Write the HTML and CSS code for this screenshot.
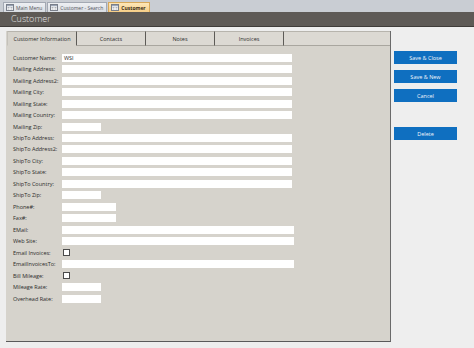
FILE: index.html
```html
<!DOCTYPE html>
<html lang="en">
<head>
    <meta charset="UTF-8">
    <title>Customer</title>
    <link rel="stylesheet" href="styles.css">
</head>
<body>
    <!-- Document tabs -->
    <div class="doc-tabs">
        <div class="doc-tab">
            <svg class="form-icon" viewBox="0 0 8 7"><rect x="0.5" y="0.5" width="7" height="6" fill="#fff" stroke="#7a7f8a"/><rect x="1" y="1" width="6" height="1.3" fill="#9aa4b4"/><path d="M1.5 3.5h2M1.5 5h2M4.5 3.5h2M4.5 5h2" stroke="#8a8f99" stroke-width="0.7"/></svg>
            Main Menu
        </div>
        <div class="doc-tab">
            <svg class="form-icon" viewBox="0 0 8 7"><rect x="0.5" y="0.5" width="7" height="6" fill="#fff" stroke="#7a7f8a"/><rect x="1" y="1" width="6" height="1.3" fill="#9aa4b4"/><path d="M1.5 3.5h2M1.5 5h2M4.5 3.5h2M4.5 5h2" stroke="#8a8f99" stroke-width="0.7"/></svg>
            Customer - Search
        </div>
        <div class="doc-tab active">
            <svg class="form-icon" viewBox="0 0 8 7"><rect x="0.5" y="0.5" width="7" height="6" fill="#fff" stroke="#7a7f8a"/><rect x="1" y="1" width="6" height="1.3" fill="#9aa4b4"/><path d="M1.5 3.5h2M1.5 5h2M4.5 3.5h2M4.5 5h2" stroke="#8a8f99" stroke-width="0.7"/></svg>
            Customer
        </div>
    </div>

    <div class="title-bar">Customer</div>

    <div class="main">
        <div class="form-panel">
            <div class="tab-strip">
                <div class="tab active">Customer Information</div>
                <div class="tab">Contacts</div>
                <div class="tab">Notes</div>
                <div class="tab">Invoices</div>
                <div class="tab-fill"></div>
            </div>

            <div class="fields">
                <label>Customer Name:</label><div class="field long">WSI</div>
                <label>Mailing Address:</label><div class="field long"></div>
                <label>Mailing Address2:</label><div class="field long"></div>
                <label>Mailing City:</label><div class="field long"></div>
                <label>Mailing State:</label><div class="field long"></div>
                <label>Mailing Country:</label><div class="field long"></div>
                <label>Mailing Zip:</label><div class="field short"></div>
                <label>ShipTo Address:</label><div class="field long"></div>
                <label>ShipTo Address2:</label><div class="field long"></div>
                <label>ShipTo City:</label><div class="field long"></div>
                <label>ShipTo State:</label><div class="field long"></div>
                <label>ShipTo Country:</label><div class="field long"></div>
                <label>ShipTo Zip:</label><div class="field short"></div>
                <label>Phone#:</label><div class="field medium"></div>
                <label>Fax#:</label><div class="field medium"></div>
                <label>EMail:</label><div class="field wide"></div>
                <label>Web Site:</label><div class="field wide"></div>
                <label>Email Invoices:</label><div class="check"></div>
                <label>EmailInvoicesTo:</label><div class="field wide"></div>
                <label>Bill Mileage:</label><div class="check"></div>
                <label>Mileage Rate:</label><div class="field short"></div>
                <label>Overhead Rate:</label><div class="field short"></div>
            </div>
        </div>

        <div class="actions">
            <button>Save &amp; Close</button>
            <button>Save &amp; New</button>
            <button>Cancel</button>
            <button class="delete-btn">Delete</button>
        </div>
    </div>
</body>
</html>
```

FILE: styles.css
```css
body {
    margin: 0;
    width: 474px;
    height: 348px;
    overflow: hidden;
    background-color: #eeeeee;
    font-family: "Open Sans", "Noto Sans", sans-serif;
    color: #2e2e2e;
}
.doc-tabs {
    height: 12px;
    background-color: #c9cdd3;
    display: flex;
    align-items: flex-end;
    padding-left: 3px;
    gap: 1px;
    box-sizing: border-box;
}
.doc-tab {
    height: 10px;
    display: flex;
    align-items: center;
    gap: 2px;
    padding: 0 3px 0 2px;
    font-size: 5px;
    color: #55585e;
    background: linear-gradient(#eef0f3, #d9dde3);
    border: 1px solid #a3a9b3;
    border-bottom: none;
    box-sizing: border-box;
}
.doc-tab.active {
    background: linear-gradient(#fde7b8, #f6cd86);
    border-color: #d6a85a;
    color: #3a2e1a;
    font-weight: bold;
}
.form-icon {
    width: 8px;
    height: 7px;
}
.title-bar {
    height: 14px;
    background-color: #5e5a56;
    color: #e4e4e4;
    font-size: 9px;
    font-weight: 300;
    line-height: 14px;
    padding-left: 11px;
    border-bottom: 1px solid #3f3c39;
}
.main {
    display: flex;
    padding: 4px 0 0 6px;
}
.form-panel {
    width: 385px;
    height: 311px;
    background-color: #d6d3cc;
    border-right: 1px solid #6a6a6a;
    border-bottom: 1px solid #5a5a5a;
    box-sizing: border-box;
}
.tab-strip {
    display: flex;
    height: 15px;
    padding-left: 1px;
}
.tab {
    width: 69px;
    height: 15px;
    font-size: 5.5px;
    line-height: 15px;
    text-align: center;
    color: #2e2e2e;
    background-color: #dcd9d3;
    border-top: 1px solid #b7b4ad;
    border-right: 1px solid #5d5b57;
    border-bottom: 1px solid #a9a69f;
    box-sizing: border-box;
}
.tab.active {
    width: 70px;
    background-color: #d6d3cc;
    border-bottom-color: #d6d3cc;
    border-left: 1px solid #c4c1ba;
}
.tab-fill {
    flex: 1;
    background-color: #dcd9d3;
    border-top: 1px solid #b7b4ad;
    border-bottom: 1px solid #a9a69f;
}
.fields {
    display: grid;
    grid-template-columns: 49px 1fr;
    grid-auto-rows: 11.48px;
    align-items: center;
    padding: 6px 0 0 7px;
}
.fields label {
    font-size: 5.5px;
    white-space: nowrap;
    color: #2b2b2b;
}
.field {
    height: 8px;
    background-color: #fff;
    font-size: 5.5px;
    line-height: 8px;
    padding-left: 2px;
    box-sizing: border-box;
}
.long {
    width: 230px;
}
.wide {
    width: 232px;
}
.short {
    width: 39px;
}
.medium {
    width: 54px;
}
.check {
    width: 5px;
    height: 5px;
    margin-left: 1px;
    background-color: #fff;
    border: 1px solid #4a4a4a;
}
.actions {
    display: flex;
    flex-direction: column;
    gap: 6px;
    padding: 20px 0 0 3px;
}
button {
    width: 63px;
    height: 13px;
    padding: 0;
    background-color: #0f6fc0;
    color: #f2f6fb;
    border: none;
    font-family: "Open Sans", "Noto Sans", sans-serif;
    font-size: 5.5px;
}
.delete-btn {
    margin-top: 19px;
}
```
